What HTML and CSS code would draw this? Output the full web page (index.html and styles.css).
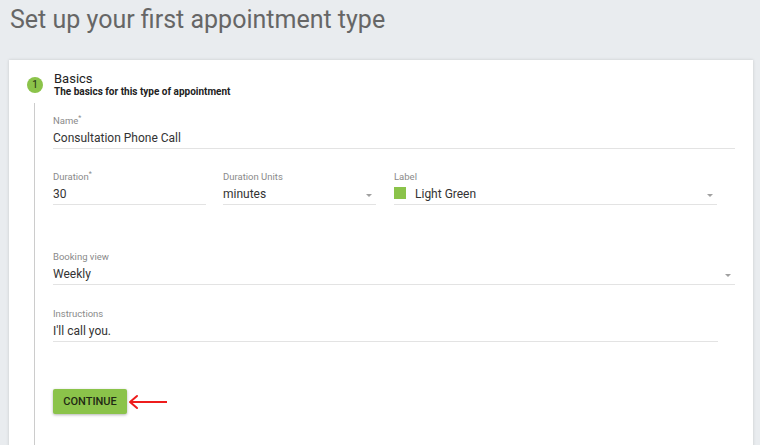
FILE: index.html
```html
<!DOCTYPE html>
<html lang="en">
  <head>
    <meta charset="UTF-8" />
    <title>Set up your first appointment type</title>
    <meta name="viewport" content="width=device-width, initial-scale=1.0" />
    <link rel="stylesheet" href="styles.css">
  </head>
  <body>
    <h1 class="page-title">Set up your first appointment type</h1>

    <div class="card">
      <div class="step-head">
        <span class="step-num">1</span>
        <div class="step-text">
          <div class="step-title">Basics</div>
          <div class="step-sub">The basics for this type of appointment</div>
        </div>
      </div>

      <div class="step-body">
        <div class="field name-field">
          <label>Name<sup>*</sup></label>
          <div class="value">Consultation Phone Call</div>
        </div>

        <div class="row">
          <div class="field col-duration">
            <label>Duration<sup>*</sup></label>
            <div class="value">30</div>
          </div>
          <div class="field col-units">
            <label>Duration Units</label>
            <div class="value select">minutes<span class="caret"></span></div>
          </div>
          <div class="field col-label">
            <label>Label</label>
            <div class="value select"><span class="swatch"></span>Light Green<span class="caret"></span></div>
          </div>
        </div>

        <div class="field booking-field">
          <label>Booking view</label>
          <div class="value select">Weekly<span class="caret"></span></div>
        </div>

        <div class="field instructions-field">
          <label>Instructions</label>
          <div class="value">I'll call you.</div>
        </div>

        <div class="actions">
          <button class="continue">CONTINUE</button>
          <svg class="pointer" width="42" height="16" viewBox="0 0 42 16">
            <path d="M2 8 H39" stroke="#ee1c1c" stroke-width="2" fill="none" />
            <path d="M9 2 L2 8 L9 14" stroke="#ee1c1c" stroke-width="2" fill="none" stroke-linecap="round" stroke-linejoin="round" />
          </svg>
        </div>
      </div>
    </div>
  </body>
</html>
```

FILE: styles.css
```css
body {
  margin: 0;
  background-color: #e9ecef;
  font-family: Roboto, "Liberation Sans", sans-serif;
  color: #333333;
  overflow: hidden;
}

.page-title {
  margin: 0;
  height: 60px;
  padding: 5px 0 0 10px;
  box-sizing: border-box;
  font-size: 25px;
  font-weight: 400;
  line-height: 30px;
  color: #666666;
}

.card {
  margin: 0 7px 0 9px;
  background: #ffffff;
  box-shadow: 0 0 3px rgba(0, 0, 0, 0.15);
  padding: 12px 18px 40px 18px;
  height: 420px;
  box-sizing: border-box;
}

.step-head {
  display: flex;
  align-items: flex-start;
}

.step-num {
  width: 16px;
  height: 16px;
  margin-top: 5px;
  border-radius: 50%;
  background: #8bc34a;
  color: #1f2d10;
  font-size: 10px;
  line-height: 16px;
  text-align: center;
}

.step-text {
  margin-left: 11px;
}

.step-title {
  font-size: 13px;
  line-height: 14px;
  color: #222222;
}

.step-sub {
  font-size: 10px;
  font-weight: 700;
  line-height: 12px;
  color: #222222;
}

.step-body {
  margin: 5px 0 0 7px;
  border-left: 1px solid #cccccc;
  padding: 11px 0 20px 18px;
  height: 336px;
}

.field label {
  display: block;
  font-size: 9.5px;
  line-height: 14px;
  color: #8a8a8a;
}

.field sup {
  font-size: 7px;
  line-height: 0;
  vertical-align: 4px;
}

.field .value {
  position: relative;
  font-size: 12px;
  line-height: 20px;
  padding-bottom: 0;
  border-bottom: 1px solid #e3e3e3;
  color: #333333;
}

.row {
  display: flex;
  margin-top: 21px;
}

.col-duration {
  width: 153px;
}

.col-units {
  width: 153px;
  margin-left: 17px;
}

.col-label {
  width: 323px;
  margin-left: 18px;
}

.booking-field {
  margin-top: 45px;
}

.instructions-field {
  margin-top: 22px;
  width: 665px;
}

.caret {
  position: absolute;
  right: 4px;
  top: 10px;
  border-left: 3px solid transparent;
  border-right: 3px solid transparent;
  border-top: 3px solid #a0a0a0;
}

.swatch {
  display: inline-block;
  width: 12px;
  height: 12px;
  background: #8bc34a;
  margin: 0 9px 0 0;
  vertical-align: -1px;
}

.actions {
  display: flex;
  align-items: center;
  margin-top: 47px;
}

.continue {
  width: 74px;
  height: 25px;
  border: none;
  border-radius: 2px;
  background: #8bc34a;
  color: #1f2a14;
  font-family: Roboto, "Liberation Sans", sans-serif;
  font-size: 11px;
  font-weight: 500;
  padding: 0;
  box-shadow: 0 1px 3px rgba(0, 0, 0, 0.3);
  cursor: pointer;
}

.pointer {
  margin-left: 1px;
}
```
